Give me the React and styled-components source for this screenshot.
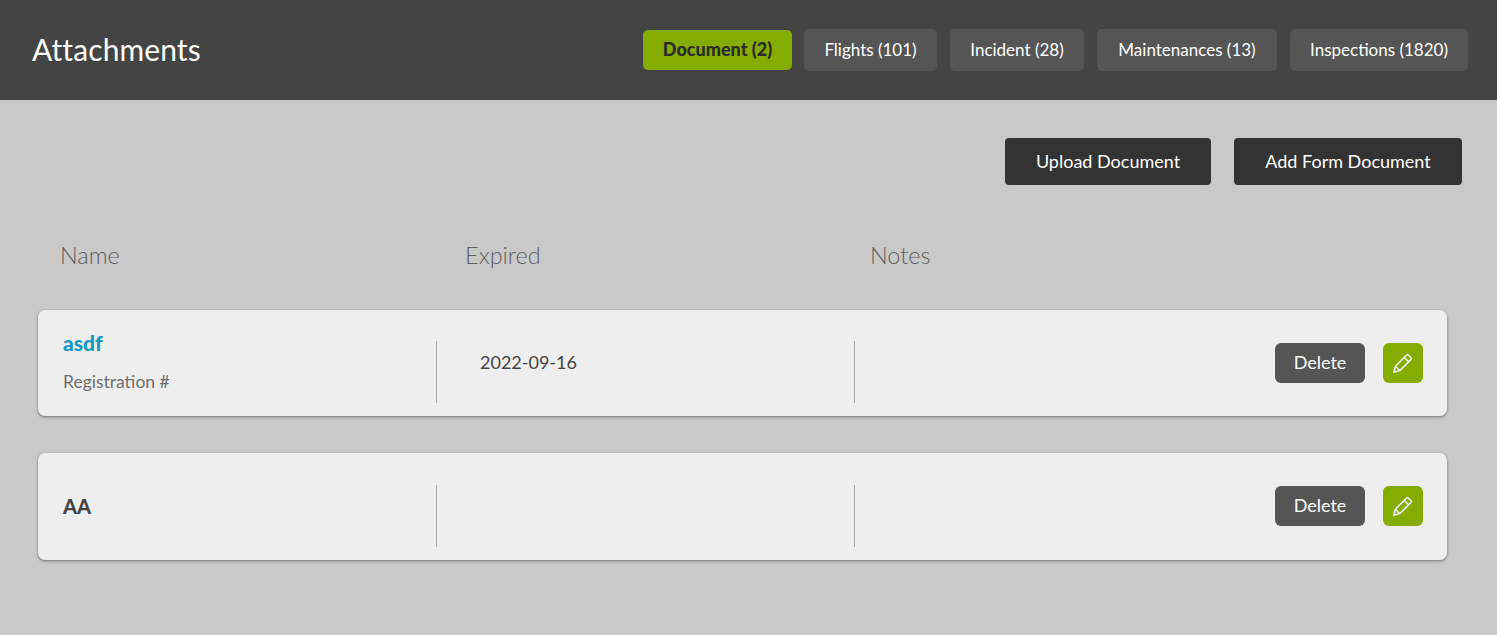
import React from 'react'
import styled, { createGlobalStyle } from 'styled-components'

const GlobalStyle = createGlobalStyle`
  html, body { margin: 0; padding: 0; }
  body { background: #c9c9c9; font-family: "Lato", "Liberation Sans", sans-serif; }
`

const Page = styled.div`
  width: 1497px;
  height: 635px;
  overflow: hidden;
  background: #c9c9c9;
`
const Header = styled.header`
  height: 100px;
  background: #444444;
  display: flex;
  align-items: center;
  justify-content: space-between;
  padding: 0 29px 0 32px;
`
const Title = styled.h1`
  margin: 0 0 2px;
  font-size: 30px;
  font-weight: 400;
  letter-spacing: 0.1px;
  color: #fff;
`
const Tabs = styled.nav`
  display: flex;
  align-items: center;
  gap: 13px;
`
const Tab = styled.button`
  box-sizing: border-box;
  width: ${p => p.$w}px;
  height: ${p => (p.$active ? 40 : 42)}px;
  margin-right: ${p => (p.$active ? -1 : 0)}px;
  border: 0;
  border-radius: 5px;
  padding: 0 0 2px;
  font-family: inherit;
  font-size: ${p => (p.$active ? 18 : 17)}px;
  font-weight: ${p => (p.$active ? 900 : 400)};
  color: ${p => (p.$active ? '#2b2b2b' : '#fff')};
  background: ${p => (p.$active ? '#84ad00' : '#555555')};
`
const Toolbar = styled.div`
  display: flex;
  justify-content: flex-end;
  gap: 23px;
  padding: 38px 35px 0 0;
`
const ToolButton = styled.button`
  box-sizing: border-box;
  width: ${p => p.$w}px;
  height: 47px;
  border: 0;
  border-radius: 4px;
  padding: 0 0 2px;
  background: #333333;
  color: #fff;
  font-family: inherit;
  font-size: 18px;
`
const Columns = styled.div`
  display: grid;
  grid-template-columns: 405px 405px 1fr;
  padding: 56px 0 0 60px;
  height: 69px;
  font-size: 23.5px;
  font-weight: 300;
  line-height: 28px;
  color: #5f5f5f;
`
const Cards = styled.div`
  display: flex;
  flex-direction: column;
  gap: 37px;
  width: 1409px;
  margin-left: 38px;
`
const Card = styled.div`
  box-sizing: border-box;
  height: ${p => p.$h}px;
  padding-top: 18px;
  display: flex;
  align-items: center;
  background: #eeeeee;
  border-radius: 7px;
  box-shadow: 0 1px 3px rgba(0, 0, 0, 0.45);
`
const NameCell = styled.div`
  box-sizing: border-box;
  width: 399px;
  height: 62px;
  padding-left: 25px;
  display: flex;
  flex-direction: column;
  justify-content: ${p => (p.$center ? 'center' : 'flex-start')};
  border-right: 1px solid #a9a9a9;
`
const Name = styled.a`
  font-size: ${p => (p.$link ? 21 : 20)}px;
  font-weight: 900;
  line-height: 24px;
  margin-top: ${p => (p.$link ? '-10px' : '-20px')};
  color: ${p => (p.$link ? '#1799c6' : '#444444')};
`
const Sub = styled.span`
  font-size: 17.5px;
  line-height: 22px;
  margin-top: 16px;
  color: #6e6e6e;
`
const DateCell = styled.div`
  box-sizing: border-box;
  width: 418px;
  height: 62px;
  padding: 6px 0 0 43px;
  font-size: 18px;
  line-height: 30px;
  color: #444444;
  border-right: 1px solid #a9a9a9;
`
const Actions = styled.div`
  flex: 1;
  display: flex;
  justify-content: flex-end;
  align-items: center;
  gap: 18px;
  padding-right: 24px;
  margin-top: ${p => p.$top}px;
`
const DeleteButton = styled.button`
  width: 90px;
  height: 40px;
  border: 0;
  border-radius: 6px;
  padding: 0 0 2px;
  background: #555555;
  color: #fff;
  font-family: inherit;
  font-size: 18px;
`
const EditButton = styled.button`
  width: 40px;
  height: 40px;
  border: 0;
  border-radius: 6px;
  padding: 0;
  background: #84ad00;
  display: flex;
  align-items: center;
  justify-content: center;
`

const Pencil = () => (
  <svg width="20" height="20" viewBox="0 0 20 20" fill="none" stroke="#eeeeee" strokeWidth="1.6" strokeLinejoin="round">
    <path d="M0.8 19.2L2.4 13.2L13.4 2.2a1.5 1.5 0 0 1 2.1 0L17.8 4.5a1.5 1.5 0 0 1 0 2.1L6.8 17.6z" />
    <path d="M11.2 4.4L15.6 8.8M2.4 13.2L6.8 17.6" />
  </svg>
)

const tabs = [
  { label: 'Document (2)', w: 149, active: true },
  { label: 'Flights (101)', w: 133 },
  { label: 'Incident (28)', w: 134 },
  { label: 'Maintenances (13)', w: 180 },
  { label: 'Inspections (1820)', w: 178 },
]

const RowActions = ({ top }) => (
  <Actions $top={top}>
    <DeleteButton>Delete</DeleteButton>
    <EditButton><Pencil /></EditButton>
  </Actions>
)

export default function App() {
  return (
    <Page>
      <GlobalStyle />
      <Header>
        <Title>Attachments</Title>
        <Tabs>
          {tabs.map(t => (
            <Tab key={t.label} $w={t.w} $active={t.active}>{t.label}</Tab>
          ))}
        </Tabs>
      </Header>
      <Toolbar>
        <ToolButton $w={206}>Upload Document</ToolButton>
        <ToolButton $w={228}>Add Form Document</ToolButton>
      </Toolbar>
      <Columns>
        <span>Name</span>
        <span>Expired</span>
        <span>Notes</span>
      </Columns>
      <Cards>
        <Card $h={106}>
          <NameCell>
            <Name $link>asdf</Name>
            <Sub>Registration #</Sub>
          </NameCell>
          <DateCell>2022-09-16</DateCell>
          <RowActions top={-18} />
        </Card>
        <Card $h={107}>
          <NameCell $center>
            <Name>AA</Name>
          </NameCell>
          <DateCell />
          <RowActions top={-19} />
        </Card>
      </Cards>
    </Page>
  )
}
